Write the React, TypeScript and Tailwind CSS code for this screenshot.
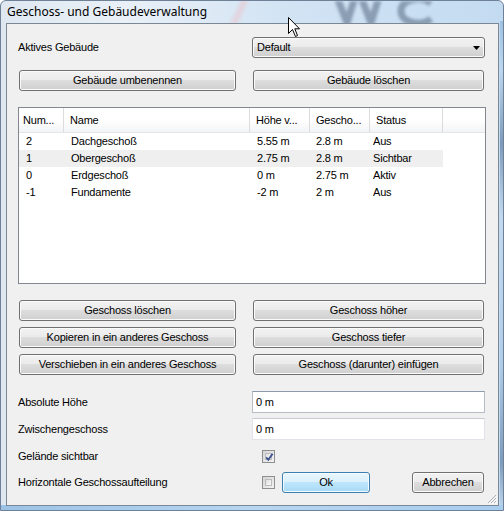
import React from "react";

function Btn({ children, className = "" }: { children: React.ReactNode; className?: string }) {
  return (
    <div
      className={
        "h-[21px] flex items-center justify-center rounded-[3px] border border-[#707070] bg-[linear-gradient(#f2f2f2_0%,#ebebeb_48%,#dddddd_50%,#cfcfcf_100%)] shadow-[inset_0_0_0_1px_#fbfbfb] text-black " +
        className
      }
    >
      {children}
    </div>
  );
}

function Check({ checked }: { checked?: boolean }) {
  return (
    <div className="w-[13px] h-[13px] border border-[#8e8f8f] bg-[linear-gradient(135deg,#d4d4d4_0%,#f4f4f4_100%)] p-[2px] shrink-0">
      <div className="w-full h-full border border-[#bcbcbc] bg-[linear-gradient(135deg,#dedede_0%,#fbfbfb_100%)] relative">
        {checked && (
          <svg className="absolute left-[-2px] top-[-2px]" width="11" height="11" viewBox="0 0 11 11">
            <path d="M2.2 5.4 L4.3 7.8 L8.6 1.8" fill="none" stroke="#3b4f8c" strokeWidth="1.8" />
          </svg>
        )}
      </div>
    </div>
  );
}

const rows = [
  ["2", "Dachgeschoß", "5.55 m", "2.8 m", "Aus"],
  ["1", "Obergeschoß", "2.75 m", "2.8 m", "Sichtbar"],
  ["0", "Erdgeschoß", "0 m", "2.75 m", "Aktiv"],
  ["-1", "Fundamente", "-2 m", "2 m", "Aus"],
];

export default function App() {
  return (
    <div className="relative w-[504px] h-[511px] overflow-hidden rounded-t-[6px] border border-[#6f8196] bg-[linear-gradient(90deg,#dfe8f1_0%,#e9f0f7_25%,#d3e4f4_55%,#c3dbf1_100%)] font-['Liberation_Sans',Arial,sans-serif] text-[11px] tracking-[-0.2px] text-black">
      {/* glass decorations (blurred desktop behind the glass) */}
      <div className="absolute left-[205px] top-[-6px] w-[70px] h-[34px] bg-[linear-gradient(115deg,transparent_40%,#e9c6cf_48%,transparent_56%)] opacity-60" />
      <svg className="absolute left-[330px] top-0 blur-[1.5px] opacity-60" width="120" height="24" viewBox="0 0 120 24">
        <path d="M6 -4 L16 22 L24 -4 M30 -4 L40 22 L48 -4" fill="none" stroke="#5e7189" strokeWidth="7" />
        <path d="M100 2 C90 -6 70 -2 70 10 C70 22 90 26 100 18" fill="none" stroke="#5e7189" strokeWidth="7" />
      </svg>
      <div className="absolute right-0 top-[20px] w-[3px] h-[490px] bg-[linear-gradient(#8fb5db_0%,#b9d5ee_10%,#5f7fa3_25%,#c2daf0_40%,#a7c6e5_70%,#5f7fa3_90%,#c2daf0_100%)] opacity-70" />
      <div className="absolute left-0 bottom-0 w-full h-[5px] bg-[linear-gradient(90deg,#9cc3e6_0%,#b6d6f1_50%,#a9cdef_100%)]" />

      <div className="relative flex flex-col h-full">
        <div className="h-[22px] pl-[6px] flex items-center font-['Noto_Sans',sans-serif] text-[12px] tracking-[0px] text-black">
          Geschoss- und Gebäudeverwaltung
        </div>
        <div className="relative ml-[5px] mr-[4px] mb-[4px] flex-1 border border-[#7a8795] bg-[#f0f0f0] pl-[11px] pr-[13px] pt-[13px] flex flex-col">
          {/* row A */}
          <div className="grid grid-cols-[219px_1fr] gap-x-[15px] h-[21px] items-center">
            <div>Aktives Gebäude</div>
            <div className="relative h-[21px] flex items-center pl-[4px] rounded-[3px] border border-[#707070] bg-[linear-gradient(#f2f2f2_0%,#ebebeb_48%,#dddddd_50%,#cfcfcf_100%)] shadow-[inset_0_0_0_1px_#fbfbfb]">
              Default
              <svg className="absolute right-[4px] top-[8px]" width="7" height="4" viewBox="0 0 7 4">
                <path d="M0 0 H7 L3.5 4 Z" fill="#000" />
              </svg>
            </div>
          </div>
          {/* row B */}
          <div className="grid grid-cols-[219px_1fr] gap-x-[15px] mt-[12px]">
            <Btn className="mx-[1px]">Gebäude umbenennen</Btn>
            <Btn className="mx-[1px]">Gebäude löschen</Btn>
          </div>
          {/* list */}
          <div className="mt-[16px] h-[177px] mr-[-1px] border border-[#828790] bg-white flex flex-col">
            <div className="h-[25px] flex bg-[linear-gradient(#ffffff_0%,#ffffff_50%,#f3f4f6_100%)] border-b border-[#e5e5e5]">
              <div className="w-[45px] pl-[4px] flex items-center border-r border-[#dcdcdc]">Num...</div>
              <div className="w-[186px] pl-[6px] flex items-center border-r border-[#dcdcdc]">Name</div>
              <div className="w-[60px] pl-[6px] flex items-center border-r border-[#dcdcdc]">Höhe v...</div>
              <div className="w-[60px] pl-[6px] flex items-center border-r border-[#dcdcdc]">Gescho...</div>
              <div className="w-[73px] pl-[6px] flex items-center border-r border-[#dcdcdc]">Status</div>
              <div className="flex-1" />
            </div>
            {rows.map((r, i) => (
              <div key={i} className={"h-[17px] w-[424px] flex items-center " + (i === 1 ? "bg-[#efefef]" : "")}>
                <div className="w-[45px] pl-[7px]">{r[0]}</div>
                <div className="w-[186px] pl-[7px]">{r[1]}</div>
                <div className="w-[60px] pl-[7px]">{r[2]}</div>
                <div className="w-[60px] pl-[6px]">{r[3]}</div>
                <div className="w-[73px] pl-[3px]">{r[4]}</div>
              </div>
            ))}
          </div>
          {/* buttons */}
          <div className="grid grid-cols-[219px_1fr] gap-x-[15px] gap-y-[6px] mt-[16px]">
            <Btn className="mx-[1px]">Geschoss löschen</Btn>
            <Btn className="mx-[1px]">Geschoss höher</Btn>
            <Btn className="mx-[1px]">Kopieren in ein anderes Geschoss</Btn>
            <Btn className="mx-[1px]">Geschoss tiefer</Btn>
            <Btn className="mx-[1px]">Verschieben in ein anderes Geschoss</Btn>
            <Btn className="mx-[1px]">Geschoss (darunter) einfügen</Btn>
          </div>
          {/* inputs */}
          <div className="grid grid-cols-[219px_1fr] gap-x-[15px] mt-[16px] h-[22px] items-center">
            <div>Absolute Höhe</div>
            <div className="h-[22px] bg-white border border-[#b7bcc5] border-t-[#8e9bab] flex items-center pl-[3px]">0 m</div>
          </div>
          <div className="grid grid-cols-[219px_1fr] gap-x-[15px] mt-[5px] h-[22px] items-center">
            <div>Zwischengeschoss</div>
            <div className="h-[22px] bg-white border border-[#e2e3ea] border-t-[#c6c9cf] flex items-center pl-[3px]">0 m</div>
          </div>
          <div className="grid grid-cols-[219px_1fr] gap-x-[15px] mt-[6px] h-[20px] items-center">
            <div>Gelände sichtbar</div>
            <div className="pl-[10px] flex items-center">
              <Check checked />
            </div>
          </div>
          <div className="grid grid-cols-[219px_1fr] gap-x-[15px] mt-[6px] h-[21px] items-center">
            <div>Horizontale Geschossaufteilung</div>
            <div className="flex items-center">
              <div className="pl-[10px] w-[30px] flex items-center">
                <Check />
              </div>
              <div className="w-[88px] h-[21px] flex items-center justify-center rounded-[3px] border border-[#3c7fb1] bg-[linear-gradient(#eaf6fd_0%,#d9f0fc_48%,#bee6fd_50%,#a7d9f5_100%)] shadow-[inset_0_0_0_1px_#f4fbff]">
                Ok
              </div>
              <div className="flex-1" />
              <Btn className="w-[72px] mr-[1px]">Abbrechen</Btn>
            </div>
          </div>
          {/* grip */}
          <svg className="absolute right-[1px] bottom-[1px]" width="11" height="11" viewBox="0 0 11 11">
            <path d="M10 2 L2 10 M10 5 L5 10 M10 8 L8 10" stroke="#a9b0b8" strokeWidth="1" />
            <path d="M11 3 L3 11 M11 6 L6 11 M11 9 L9 11" stroke="#ffffff" strokeWidth="1" />
          </svg>
        </div>
      </div>

      {/* cursor */}
      <svg className="absolute left-[287px] top-[16px]" width="14" height="21" viewBox="0 0 14 21">
        <path d="M0.5 0.5 L0.5 16.5 L4.5 12.5 L7.5 19.5 L9.5 18.5 L6.8 11.8 L11.5 11.8 Z" fill="#fff" stroke="#000" strokeWidth="1" />
      </svg>
    </div>
  );
}
